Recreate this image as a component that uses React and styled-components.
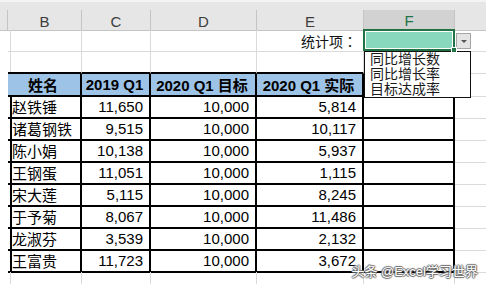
import styled, { createGlobalStyle } from 'styled-components';

const GlobalStyle = createGlobalStyle`
  html, body { margin: 0; padding: 0; background: #fff; }
  body { font-family: "Liberation Sans", "Noto Sans CJK SC", sans-serif; }
`;

const COLS = '8px 74px 69px 106px 107px 91px 1fr';
const LINE = { grid: '1px solid #dadada', bold: '2px solid #000', none: '0' };
const GREEN = '#217346';

const letters = ['', 'B', 'C', 'D', 'E', 'F', ''];
const heads = ['姓名', '2019 Q1', '2020 Q1 目标', '2020 Q1 实际', ''];
const people = [
  ['赵铁锤', '11,650', '10,000', '5,814'],
  ['诸葛钢铁', '9,515', '10,000', '10,117'],
  ['陈小娟', '10,138', '10,000', '5,937'],
  ['王钢蛋', '11,051', '10,000', '1,115'],
  ['宋大莲', '5,115', '10,000', '8,245'],
  ['于予菊', '8,067', '10,000', '11,486'],
  ['龙淑芬', '3,539', '10,000', '2,132'],
  ['王富贵', '11,723', '10,000', '3,672'],
];
const options = ['同比增长数', '同比增长率', '目标达成率'];

export default function App() {
  const rows = [
    { kind: 'stat' },
    { kind: 'blank' },
    { kind: 'head', cells: heads },
    ...people.map((p) => ({ kind: 'data', cells: [...p, ''] })),
    { kind: 'blank' },
  ];

  return (
    <>
      <GlobalStyle />
      <Screen>
        <TopBand />
        <HeaderRow>
          {letters.map((l, i) => (
            <ColLetter key={i} $active={l === 'F'} $last={i === 6}>
              {l}
            </ColLetter>
          ))}
        </HeaderRow>

        {rows.map((row, ri) => {
          const inTable = row.kind === 'head' || row.kind === 'data';
          return (
            <SheetRow key={ri}>
              {letters.map((_, ci) => {
                let r = 'grid';
                let b = 'grid';
                if (ci === 0) {
                  r = inTable ? 'bold' : 'grid';
                  b = 'none';
                } else if (ci === 6) {
                  r = 'none';
                } else if (inTable) {
                  r = 'bold';
                  b = 'bold';
                } else if (ri === 1) {
                  b = 'bold';
                }

                if (row.kind === 'stat' && ci === 4) {
                  return (
                    <Cell key={ci} $r={r} $b={b} $align="right">
                      <StatLabel>统计项：</StatLabel>
                    </Cell>
                  );
                }
                if (row.kind === 'stat' && ci === 5) {
                  return (
                    <Cell key={ci} $r={r} $b={b}>
                      <Selection />
                      <FillHandle />
                      <DropButton>
                        <Caret />
                      </DropButton>
                      <OptionList>
                        {options.map((o) => (
                          <Option key={o}>{o}</Option>
                        ))}
                      </OptionList>
                    </Cell>
                  );
                }

                const text = inTable && ci >= 1 && ci <= 5 ? row.cells[ci - 1] : '';
                const isHead = row.kind === 'head';
                return (
                  <Cell
                    key={ci}
                    $r={r}
                    $b={b}
                    $align={isHead ? 'center' : ci === 1 ? 'left' : 'right'}
                    $fill={isHead && ci >= 1 && ci <= 4 ? '#9dc3e6' : undefined}
                    $bold={isHead}
                  >
                    {text}
                  </Cell>
                );
              })}
            </SheetRow>
          );
        })}

        <Watermark>头条 @Excel学习世界</Watermark>
      </Screen>
    </>
  );
}

const Screen = styled.div`
  position: relative;
  width: 486px;
  height: 284px;
  overflow: hidden;
  background: #fff;
`;

const TopBand = styled.div`
  box-sizing: border-box;
  height: 10px;
  background: #e6e6e6;
  border-top: 2px solid #f4f4f4;
`;

const HeaderRow = styled.div`
  display: grid;
  grid-template-columns: ${COLS};
  height: 20px;
  background: #e6e6e6;
`;

const ColLetter = styled.div`
  box-sizing: border-box;
  display: flex;
  align-items: center;
  justify-content: center;
  padding-top: 2px;
  font-size: 15px;
  color: ${(p) => (p.$active ? GREEN : '#3c3c3c')};
  background: ${(p) => (p.$active ? '#d2d2d2' : 'transparent')};
  border-right: ${(p) => (p.$last ? '0' : '1px solid #c4c4c4')};
  border-bottom: ${(p) => (p.$active ? `2px solid ${GREEN}` : '1px solid #c4c4c4')};
`;

const SheetRow = styled.div`
  display: grid;
  grid-template-columns: ${COLS};
  height: 22px;
`;

const Cell = styled.div`
  box-sizing: border-box;
  position: relative;
  display: flex;
  align-items: center;
  justify-content: ${(p) =>
    p.$align === 'right' ? 'flex-end' : p.$align === 'center' ? 'center' : 'flex-start'};
  padding: 0 6px 0 4px;
  border-right: ${(p) => LINE[p.$r]};
  border-bottom: ${(p) => LINE[p.$b]};
  background: ${(p) => p.$fill || 'transparent'};
  font-size: 15px;
  font-weight: ${(p) => (p.$bold ? 700 : 400)};
  color: #000;
  white-space: nowrap;
`;

const StatLabel = styled.span`
  font-family: "Noto Sans CJK TC", "Noto Sans CJK SC", sans-serif;
  font-size: 14px;
  color: #111;
`;

const Selection = styled.div`
  position: absolute;
  top: -1px;
  left: -1px;
  right: -1px;
  bottom: 0;
  border: 2px solid ${GREEN};
  background: #87d8bd;
  box-shadow: inset 0 0 0 1px #fff;
`;

const FillHandle = styled.div`
  position: absolute;
  right: -3px;
  bottom: -2px;
  width: 4px;
  height: 4px;
  background: ${GREEN};
  border: 1px solid #fff;
  z-index: 3;
`;

const DropButton = styled.div`
  box-sizing: border-box;
  position: absolute;
  left: calc(100% + 2px);
  top: 3px;
  width: 15px;
  height: 16px;
  display: flex;
  align-items: center;
  justify-content: center;
  background: #e4e4e4;
  border: 1px solid #a6a6a6;
`;

const Caret = styled.div`
  width: 0;
  height: 0;
  border-left: 3px solid transparent;
  border-right: 3px solid transparent;
  border-top: 3px solid #555;
`;

const OptionList = styled.div`
  box-sizing: border-box;
  position: absolute;
  top: 21px;
  left: 0;
  width: 107px;
  padding: 0 0 0 5px;
  background: #fff;
  border: 1px solid #111;
  z-index: 2;
`;

const Option = styled.div`
  height: 15px;
  line-height: 15px;
  font-size: 14px;
  color: #1a1a1a;
`;

const Watermark = styled.div`
  position: absolute;
  right: 8px;
  top: 261px;
  font-size: 13px;
  color: #fff;
  white-space: nowrap;
  text-shadow: -1px 0 1px #666, 1px 0 1px #666, 0 -1px 1px #666, 0 1px 1px #666;
`;
